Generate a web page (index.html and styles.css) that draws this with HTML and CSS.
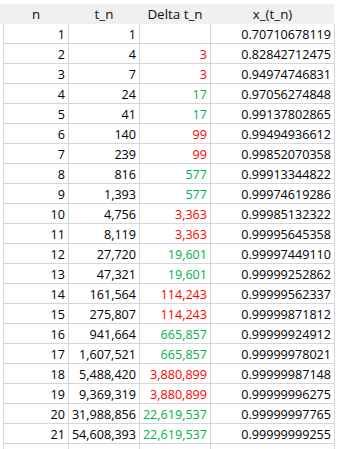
FILE: index.html
```html
<!DOCTYPE html>
<html>
<head>
<meta charset="utf-8">
<link rel="stylesheet" href="styles.css">
</head>
<body>
<div class="sheet">
  <div class="head">
    <div class="hc">n</div>
    <div class="hc">t_n</div>
    <div class="hc">Delta t_n</div>
    <div class="hc">x_(t_n)</div>
  </div>
  <div class="row"><div class="c">1</div><div class="c">1</div><div class="c"></div><div class="c">0.70710678119</div></div>
  <div class="row"><div class="c">2</div><div class="c">4</div><div class="c red">3</div><div class="c">0.82842712475</div></div>
  <div class="row"><div class="c">3</div><div class="c">7</div><div class="c red">3</div><div class="c">0.94974746831</div></div>
  <div class="row"><div class="c">4</div><div class="c">24</div><div class="c green">17</div><div class="c">0.97056274848</div></div>
  <div class="row"><div class="c">5</div><div class="c">41</div><div class="c green">17</div><div class="c">0.99137802865</div></div>
  <div class="row"><div class="c">6</div><div class="c">140</div><div class="c red">99</div><div class="c">0.99494936612</div></div>
  <div class="row"><div class="c">7</div><div class="c">239</div><div class="c red">99</div><div class="c">0.99852070358</div></div>
  <div class="row"><div class="c">8</div><div class="c">816</div><div class="c green">577</div><div class="c">0.99913344822</div></div>
  <div class="row"><div class="c">9</div><div class="c">1,393</div><div class="c green">577</div><div class="c">0.99974619286</div></div>
  <div class="row"><div class="c">10</div><div class="c">4,756</div><div class="c red">3,363</div><div class="c">0.99985132322</div></div>
  <div class="row"><div class="c">11</div><div class="c">8,119</div><div class="c red">3,363</div><div class="c">0.99995645358</div></div>
  <div class="row"><div class="c">12</div><div class="c">27,720</div><div class="c green">19,601</div><div class="c">0.99997449110</div></div>
  <div class="row"><div class="c">13</div><div class="c">47,321</div><div class="c green">19,601</div><div class="c">0.99999252862</div></div>
  <div class="row"><div class="c">14</div><div class="c">161,564</div><div class="c red">114,243</div><div class="c">0.99999562337</div></div>
  <div class="row"><div class="c">15</div><div class="c">275,807</div><div class="c red">114,243</div><div class="c">0.99999871812</div></div>
  <div class="row"><div class="c">16</div><div class="c">941,664</div><div class="c green">665,857</div><div class="c">0.99999924912</div></div>
  <div class="row"><div class="c">17</div><div class="c">1,607,521</div><div class="c green">665,857</div><div class="c">0.99999978021</div></div>
  <div class="row"><div class="c">18</div><div class="c">5,488,420</div><div class="c red">3,880,899</div><div class="c">0.99999987148</div></div>
  <div class="row"><div class="c">19</div><div class="c">9,369,319</div><div class="c red">3,880,899</div><div class="c">0.99999996275</div></div>
  <div class="row"><div class="c">20</div><div class="c">31,988,856</div><div class="c green">22,619,537</div><div class="c">0.99999997765</div></div>
  <div class="row"><div class="c">21</div><div class="c">54,608,393</div><div class="c green">22,619,537</div><div class="c">0.99999999255</div></div>
  <div class="row"><div class="c"></div><div class="c"></div><div class="c"></div><div class="c"></div></div>
</div>
</body>
</html>
```
FILE: styles.css
```css
html, body {
  margin: 0;
  padding: 0;
  background: #ffffff;
}
body {
  font-family: "Open Sans", "Liberation Sans", sans-serif;
  font-size: 12.6px;
  color: #000000;
  overflow: hidden;
  height: 449px;
}
.sheet {
  padding-top: 4px;
  width: 335px;
}
.head {
  display: grid;
  grid-template-columns: 64px 70px 70px 123px;
  column-gap: 1px;
  padding-left: 4px;
  width: 330px;
  height: 20px;
  background: #f0f0f0;
  box-sizing: content-box;
}
.hc {
  text-align: center;
  line-height: 20px;
  font-size: 13.4px;
  color: #111111;
}
.row {
  display: grid;
  grid-template-columns: 64px 70px 70px 123px;
  column-gap: 1px;
  margin-left: 3px;
  width: 330px;
  background: #d6d6d6;
  border: 1px solid #d6d6d6;
  border-top: 0;
}
.c {
  background: #ffffff;
  height: 19px;
  line-height: 21px;
  text-align: right;
  padding-right: 3px;
  white-space: nowrap;
}
.red { color: #ff0000; }
.green { color: #00b050; }
```
